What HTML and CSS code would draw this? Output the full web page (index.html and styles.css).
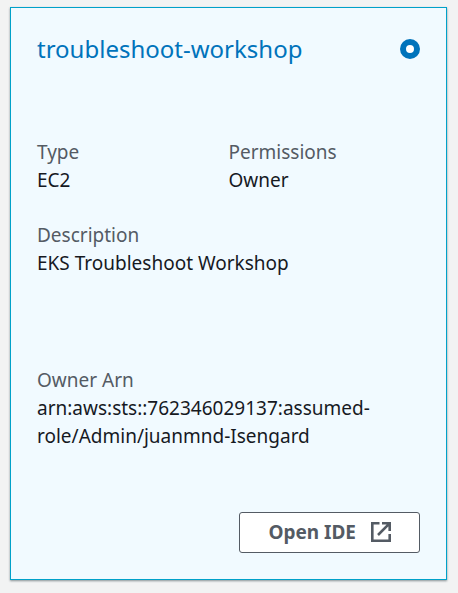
FILE: index.html
```html
<!DOCTYPE html>
<html lang="en">
<head>
<meta charset="utf-8">
<title>Environments</title>
<link rel="stylesheet" href="styles.css">
</head>
<body>
<article class="card">
  <header class="card-header">
    <h2 class="card-title"><label for="env">troubleshoot-workshop</label></h2>
    <input class="card-radio" type="radio" id="env" name="env" checked>
  </header>
  <dl class="details">
    <div class="detail">
      <dt>Type</dt>
      <dd>EC2</dd>
    </div>
    <div class="detail">
      <dt>Permissions</dt>
      <dd>Owner</dd>
    </div>
    <div class="detail detail-wide detail-description">
      <dt>Description</dt>
      <dd>EKS Troubleshoot Workshop</dd>
    </div>
    <div class="detail detail-wide">
      <dt>Owner Arn</dt>
      <dd>arn:aws:sts::762346029137:assumed-role/Admin/juanmnd-Isengard</dd>
    </div>
  </dl>
  <footer class="card-footer">
    <button class="button" type="button">
      <span>Open IDE</span>
      <svg class="button-icon" viewBox="0 0 20 20" fill="none" stroke="currentColor" stroke-width="2.6" aria-hidden="true">
        <path d="M8.500 1.300H1.300v17.400h17.400V12M11 1.300h7.700V9M18.300 1.700L7 13"/>
      </svg>
    </button>
  </footer>
</article>
</body>
</html>
```

FILE: styles.css
```css
* {
  box-sizing: border-box;
}

body {
  margin: 0;
  padding: 7px 11px 13px 10px;
  background: #f2f3f3;
  color: #16191f;
  font-family: "Noto Sans", "Open Sans", sans-serif;
  font-size: 19px;
  line-height: 28px;
}

.card {
  padding: 26px;
  border: 1px solid #00a1c9;
  background: #f1faff;
  box-shadow: 0 1px 2px rgba(0, 28, 36, 0.45);
}

.card-header {
  display: flex;
  align-items: center;
  justify-content: space-between;
  margin-bottom: 74px;
}

.card-title {
  margin: 0;
  color: #0073bb;
  font-size: 24px;
  font-weight: 400;
  line-height: 30px;
}

.card-radio {
  appearance: none;
  width: 20px;
  height: 20px;
  margin: 0;
  border: 6px solid #0073bb;
  border-radius: 50%;
  background: #fff;
}

.details {
  display: grid;
  grid-template-columns: 1fr 1fr;
  row-gap: 27px;
  margin: 0;
}

.detail-wide {
  grid-column: 1 / -1;
}

.detail-description {
  margin-bottom: 62px;
}

dt {
  color: #545b64;
}

dd {
  margin: 0;
}

.card-footer {
  display: flex;
  justify-content: flex-end;
  margin-top: 62px;
}

.button {
  display: flex;
  align-items: center;
  gap: 15px;
  padding: 5px 28px 6px;
  border: 1px solid #545b64;
  border-radius: 3px;
  background: #fff;
  color: #545b64;
  font: inherit;
  font-weight: 700;
}

.button-icon {
  width: 20px;
  height: 20px;
}
```
